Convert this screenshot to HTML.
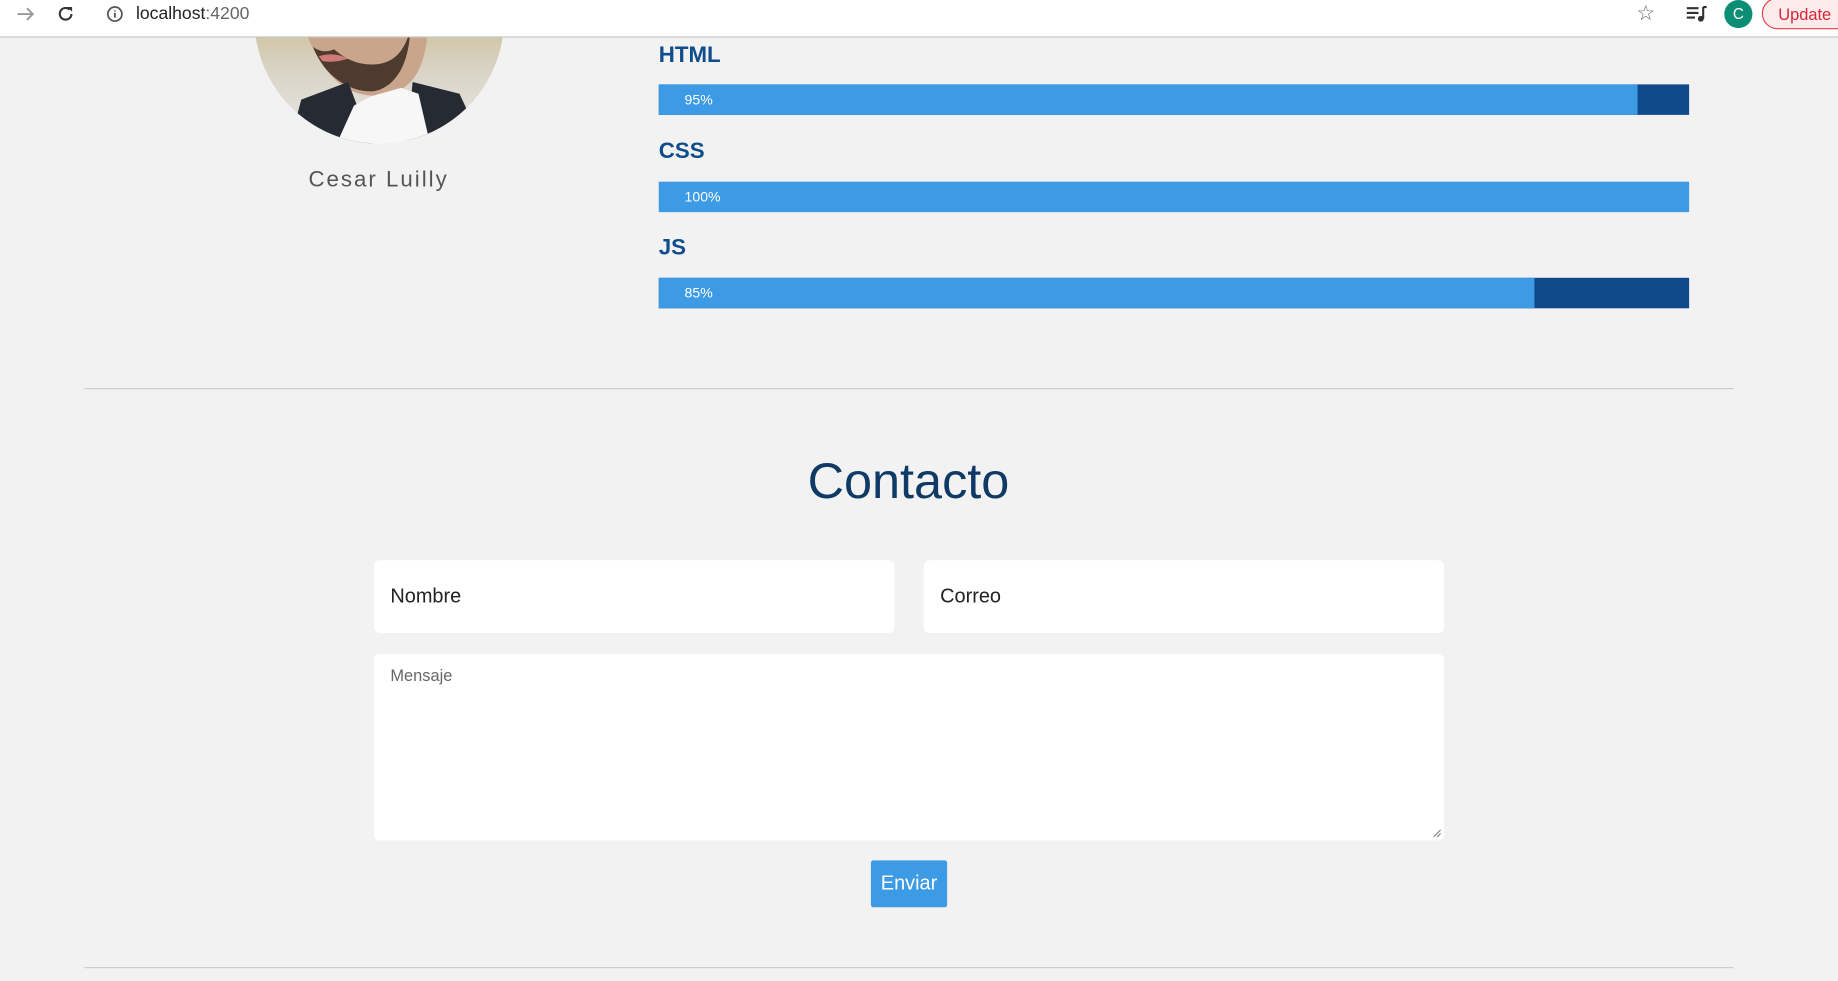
<!DOCTYPE html>
<html><head><meta charset="utf-8">
<style>
html,body{margin:0;padding:0;width:1838px;height:981px;overflow:hidden;background:#f2f2f2;}
#w{position:absolute;left:0;top:0;width:1568px;height:837px;transform:scale(1.17219);transform-origin:0 0;font-family:"Liberation Sans",sans-serif;}
.a{position:absolute;}
.bar{position:absolute;left:562px;width:879px;height:26px;background:#0f4a8a;}
.bar .f{height:26px;background:#3d9be5;color:#fff;font-size:12px;line-height:26px;padding-left:22px;box-sizing:border-box;}
.lbl{position:absolute;left:562px;font-size:19px;font-weight:bold;color:#0f4c8a;}
.inp{position:absolute;background:#fff;border-radius:5px;}
</style></head><body><div id="w">
<svg class="a" style="left:217px;top:0px" width="213" height="123" viewBox="0 0 213 123"><defs><clipPath id="c"><circle cx="106.5" cy="16" r="106.5"/></clipPath><linearGradient id="bg" x1="0" y1="0" x2="0" y2="1"><stop offset="0" stop-color="#c9b98a"/><stop offset="0.5" stop-color="#d9d4c6"/><stop offset="1" stop-color="#e9e9e9"/></linearGradient></defs><g clip-path="url(#c)"><rect width="213" height="123" fill="url(#bg)"/><path d="M45 30C50 10 70 0 70 0H140C150 10 150 40 140 60C130 80 110 85 90 80C70 75 55 55 45 30Z" fill="#c9a58c"/><path d="M50 40C60 65 80 78 100 78C120 76 132 55 133 25C128 45 118 55 100 55C85 55 75 48 68 42C62 45 55 44 50 40Z" fill="#4e3b2f"/><path d="M55 48Q68 44 80 50Q68 54 58 52Z" fill="#d07a78"/><path d="M30 123L40 85L80 70L100 123Z" fill="#262a33"/><path d="M130 123L135 70L175 80L195 123Z" fill="#262a33"/><path d="M70 123L85 90L100 82L125 75L140 80L150 123Z" fill="#f7f7f7"/><rect x="155" y="0" width="12" height="30" fill="#a08ee0" opacity="0.6"/></g></svg>
<div class="a" style="left:0;top:0;width:1568px;height:31px;background:#fff;border-bottom:1px solid #c8c8c8;"></div>
<svg class="a" style="left:12px;top:3px" width="20" height="18" viewBox="0 0 20 18"><path d="M3 9H16M11 4L16 9L11 14" stroke="#999" stroke-width="1.6" fill="none"/></svg>
<svg class="a" style="left:47px;top:3px" width="18" height="18" viewBox="0 0 18 18"><path d="M14 9A5 5 0 1 1 12.5 5.2" stroke="#333" stroke-width="1.8" fill="none"/><path d="M10.5 3H14.5V7Z" fill="#333"/></svg>
<svg class="a" style="left:90px;top:4px" width="16" height="16" viewBox="0 0 16 16"><circle cx="8" cy="8" r="6" stroke="#555" stroke-width="1.5" fill="none"/><path d="M8 7V11M8 5V5.8" stroke="#555" stroke-width="1.6"/></svg>
<div class="a" style="left:116px;top:3px;font-size:15px;color:#222;">localhost<span style="color:#666">:4200</span></div>
<div class="a" style="left:1396px;top:1px;font-size:18px;color:#666;">☆</div>
<svg class="a" style="left:1438px;top:3px" width="20" height="18" viewBox="0 0 20 18"><path d="M1 4H11M1 8H11M1 12H8" stroke="#333" stroke-width="1.8"/><path d="M15 3V13" stroke="#333" stroke-width="1.8"/><path d="M15 3H18" stroke="#333" stroke-width="1.8"/><circle cx="13" cy="13" r="2.5" fill="#333"/></svg>
<div class="a" style="left:1471px;top:0;width:24px;height:24px;border-radius:50%;background:#0b8e74;color:#fff;font-size:13px;text-align:center;line-height:24px;">C</div>
<div class="a" style="left:1503px;top:-2px;width:80px;height:27px;border:1px solid #e0404b;border-radius:14px;background:#fdeaea;color:#d7263a;font-size:14px;line-height:27px;padding-left:13px;box-sizing:border-box;">Update</div>
<div class="a" style="left:200px;top:143px;width:246px;text-align:center;font-size:19px;letter-spacing:1.7px;color:#555;">Cesar Luilly</div>
<div class="lbl" style="top:37px;">HTML</div>
<div class="bar" style="top:72px;"><div class="f" style="width:835px;">95%</div></div>
<div class="lbl" style="top:119px;">CSS</div>
<div class="bar" style="top:155px;"><div class="f" style="width:879px;">100%</div></div>
<div class="lbl" style="top:201px;">JS</div>
<div class="bar" style="top:237px;"><div class="f" style="width:747px;">85%</div></div>
<div class="a" style="left:72px;top:331px;width:1407px;height:1px;background:#ccc;"></div>
<div class="a" style="left:475px;top:383px;width:600px;text-align:center;font-size:43px;color:#0f3a66;line-height:56px;">Contacto</div>
<div class="inp" style="left:319px;top:478px;width:444px;height:62px;"><div class="a" style="left:14px;top:21px;font-size:17px;color:#222;">Nombre</div></div>
<div class="inp" style="left:788px;top:478px;width:444px;height:62px;"><div class="a" style="left:14px;top:21px;font-size:17px;color:#222;">Correo</div></div>
<div class="inp" style="left:319px;top:558px;width:913px;height:159px;"><div class="a" style="left:14px;top:10px;font-size:14px;color:#666;">Mensaje</div><svg class="a" style="right:2px;bottom:2px" width="8" height="8"><path d="M1 7L7 1M4 7L7 4" stroke="#888"/></svg></div>
<div class="a" style="left:743px;top:734px;width:65px;height:40px;background:#3d9be5;border-radius:2px;color:#fff;font-size:17px;text-align:center;line-height:40px;">Enviar</div>
<div class="a" style="left:72px;top:825px;width:1407px;height:1px;background:#ccc;"></div>
</div></body></html>
